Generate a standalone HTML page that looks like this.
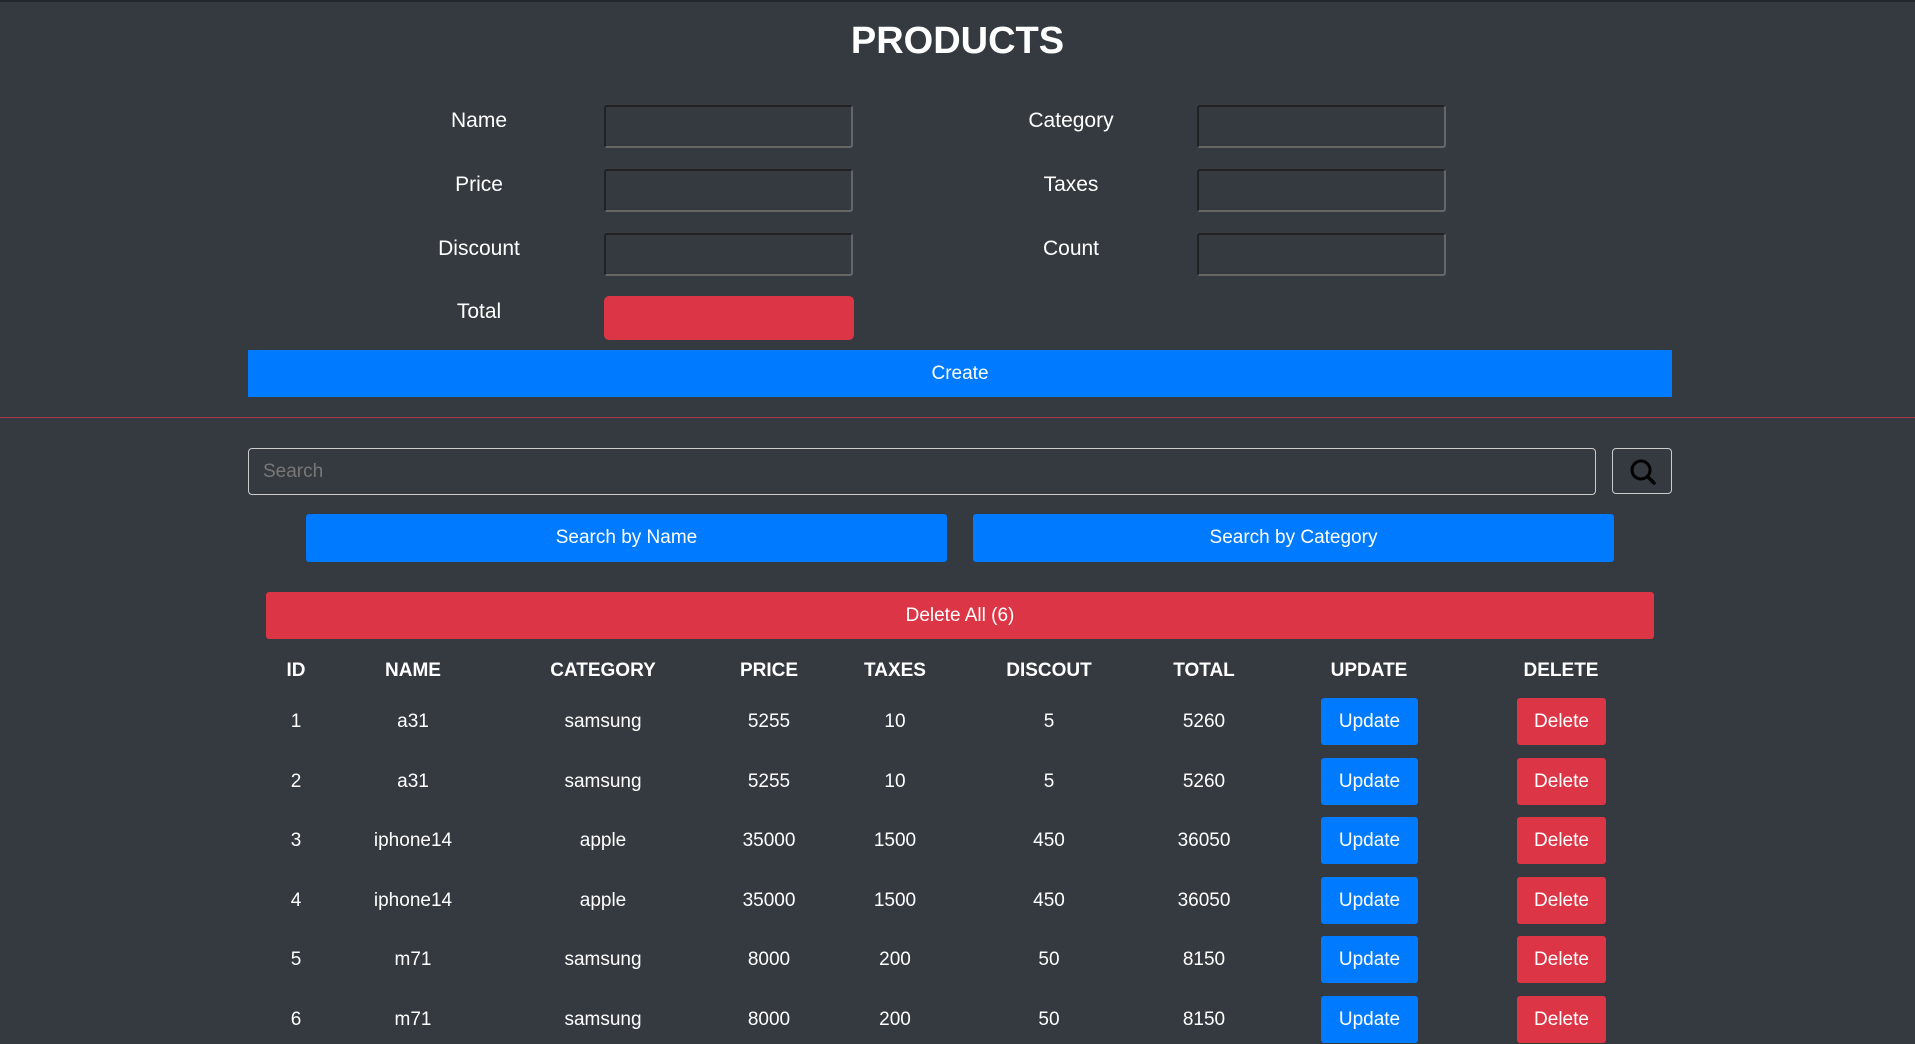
<!DOCTYPE html>
<html><head><meta charset="utf-8"><style>
*{box-sizing:border-box;margin:0;padding:0}
body{width:1915px;height:1044px;background:#343a40;font-family:"Liberation Sans",sans-serif;color:#fff;position:relative;overflow:hidden}
.a{position:absolute}
.lbl{font-size:21px;text-align:center;width:200px;transform:translateX(-100px)}
.inp{position:absolute;width:249px;height:43px;border:2px solid #222;border-bottom-color:#666;border-right-color:#666;border-radius:3px;background:#343a40}
.btn{position:absolute;display:flex;align-items:center;justify-content:center;font-size:19px;color:#fff;border-radius:3px}
.blue{background:#007bff}.red{background:#dc3545}
.c{position:absolute;font-size:19px;text-align:center;width:200px;transform:translate(-100px,-50%)}
.h{font-weight:bold}
</style></head><body>
<div class="a" style="left:0;top:0;width:1915px;height:2px;background:#23272b"></div>
<div class="a" style="left:0;width:1915px;top:20px;text-align:center;font-size:38px;font-weight:bold">PRODUCTS</div>

<div class="a lbl" style="left:479px;top:109px">Name</div>
<div class="a lbl" style="left:479px;top:173px">Price</div>
<div class="a lbl" style="left:479px;top:237px">Discount</div>
<div class="a lbl" style="left:479px;top:300px">Total</div>
<div class="a lbl" style="left:1071px;top:109px">Category</div>
<div class="a lbl" style="left:1071px;top:173px">Taxes</div>
<div class="a lbl" style="left:1071px;top:237px">Count</div>

<div class="inp" style="left:604px;top:105px"></div>
<div class="inp" style="left:604px;top:169px"></div>
<div class="inp" style="left:604px;top:233px"></div>
<div class="a red" style="left:604px;top:296px;width:250px;height:44px;border-radius:5px"></div>
<div class="inp" style="left:1197px;top:105px"></div>
<div class="inp" style="left:1197px;top:169px"></div>
<div class="inp" style="left:1197px;top:233px"></div>

<div class="btn blue" style="left:248px;top:350px;width:1424px;height:47px;border-radius:0">Create</div>
<div class="a" style="left:0;top:417px;width:1915px;height:1px;background:#a33a44"></div>

<div class="a" style="left:248px;top:448px;width:1348px;height:47px;border:1px solid #ccc;border-radius:4px;font-size:19px;color:#777;padding:12px 14px">Search</div>
<div class="a" style="left:1612px;top:448px;width:60px;height:46px;border:1px solid #ccc;border-radius:4px">
<svg width="60" height="46" viewBox="0 0 60 46"><circle cx="28" cy="21" r="9" fill="none" stroke="#000" stroke-width="3"/><line x1="34.5" y1="27.5" x2="41" y2="34" stroke="#000" stroke-width="3.5" stroke-linecap="round"/></svg></div>

<div class="btn blue" style="left:306px;top:514px;width:641px;height:48px">Search by Name</div>
<div class="btn blue" style="left:973px;top:514px;width:641px;height:48px">Search by Category</div>
<div class="btn red" style="left:266px;top:592px;width:1388px;height:47px">Delete All (6)</div>

<div class="c h" style="left:296px;top:671px">ID</div>
<div class="c h" style="left:413px;top:671px">NAME</div>
<div class="c h" style="left:603px;top:671px">CATEGORY</div>
<div class="c h" style="left:769px;top:671px">PRICE</div>
<div class="c h" style="left:895px;top:671px">TAXES</div>
<div class="c h" style="left:1049px;top:671px">DISCOUT</div>
<div class="c h" style="left:1204px;top:671px">TOTAL</div>
<div class="c h" style="left:1369px;top:671px">UPDATE</div>
<div class="c h" style="left:1561px;top:671px">DELETE</div>

<div class="c" style="left:296px;top:722px">1</div><div class="c" style="left:413px;top:722px">a31</div><div class="c" style="left:603px;top:722px">samsung</div><div class="c" style="left:769px;top:722px">5255</div><div class="c" style="left:895px;top:722px">10</div><div class="c" style="left:1049px;top:722px">5</div><div class="c" style="left:1204px;top:722px">5260</div>
<div class="btn blue" style="left:1321px;top:698px;width:97px;height:47px">Update</div><div class="btn red" style="left:1517px;top:698px;width:89px;height:47px">Delete</div>

<div class="c" style="left:296px;top:782px">2</div><div class="c" style="left:413px;top:782px">a31</div><div class="c" style="left:603px;top:782px">samsung</div><div class="c" style="left:769px;top:782px">5255</div><div class="c" style="left:895px;top:782px">10</div><div class="c" style="left:1049px;top:782px">5</div><div class="c" style="left:1204px;top:782px">5260</div>
<div class="btn blue" style="left:1321px;top:758px;width:97px;height:47px">Update</div><div class="btn red" style="left:1517px;top:758px;width:89px;height:47px">Delete</div>

<div class="c" style="left:296px;top:841px">3</div><div class="c" style="left:413px;top:841px">iphone14</div><div class="c" style="left:603px;top:841px">apple</div><div class="c" style="left:769px;top:841px">35000</div><div class="c" style="left:895px;top:841px">1500</div><div class="c" style="left:1049px;top:841px">450</div><div class="c" style="left:1204px;top:841px">36050</div>
<div class="btn blue" style="left:1321px;top:817px;width:97px;height:47px">Update</div><div class="btn red" style="left:1517px;top:817px;width:89px;height:47px">Delete</div>

<div class="c" style="left:296px;top:901px">4</div><div class="c" style="left:413px;top:901px">iphone14</div><div class="c" style="left:603px;top:901px">apple</div><div class="c" style="left:769px;top:901px">35000</div><div class="c" style="left:895px;top:901px">1500</div><div class="c" style="left:1049px;top:901px">450</div><div class="c" style="left:1204px;top:901px">36050</div>
<div class="btn blue" style="left:1321px;top:877px;width:97px;height:47px">Update</div><div class="btn red" style="left:1517px;top:877px;width:89px;height:47px">Delete</div>

<div class="c" style="left:296px;top:960px">5</div><div class="c" style="left:413px;top:960px">m71</div><div class="c" style="left:603px;top:960px">samsung</div><div class="c" style="left:769px;top:960px">8000</div><div class="c" style="left:895px;top:960px">200</div><div class="c" style="left:1049px;top:960px">50</div><div class="c" style="left:1204px;top:960px">8150</div>
<div class="btn blue" style="left:1321px;top:936px;width:97px;height:47px">Update</div><div class="btn red" style="left:1517px;top:936px;width:89px;height:47px">Delete</div>

<div class="c" style="left:296px;top:1020px">6</div><div class="c" style="left:413px;top:1020px">m71</div><div class="c" style="left:603px;top:1020px">samsung</div><div class="c" style="left:769px;top:1020px">8000</div><div class="c" style="left:895px;top:1020px">200</div><div class="c" style="left:1049px;top:1020px">50</div><div class="c" style="left:1204px;top:1020px">8150</div>
<div class="btn blue" style="left:1321px;top:996px;width:97px;height:47px">Update</div><div class="btn red" style="left:1517px;top:996px;width:89px;height:47px">Delete</div>
</body></html>
